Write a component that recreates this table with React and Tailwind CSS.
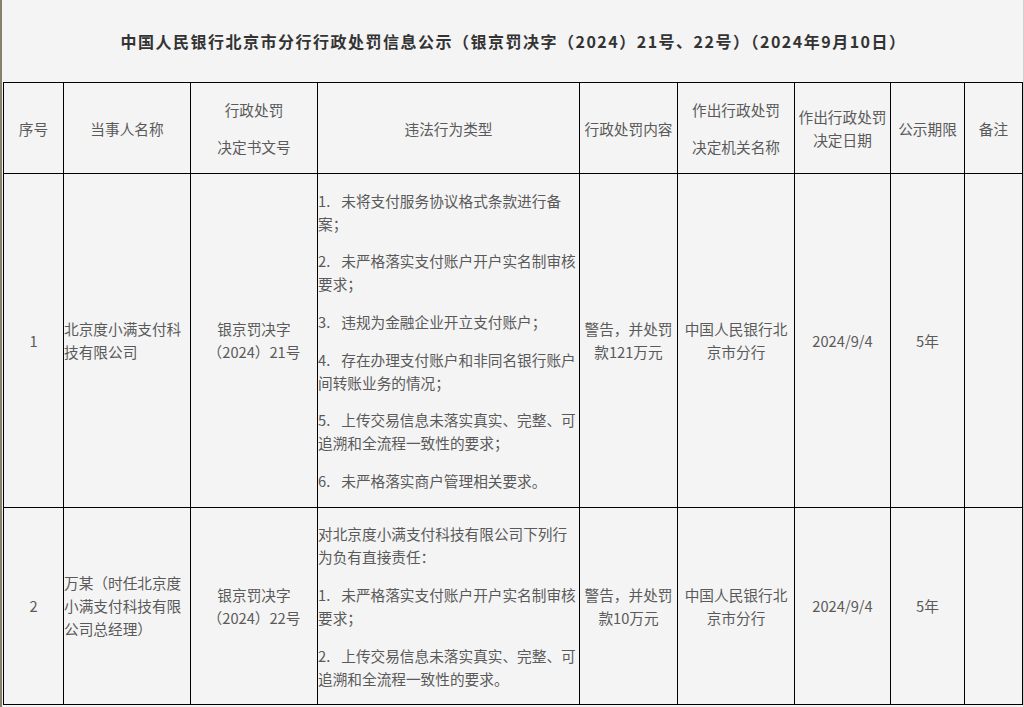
import React from "react";

const font = { fontFamily: '"Noto Sans CJK SC", "Noto Sans", sans-serif' };

function Cell({ children, className = "" }) {
  return (
    <td className={`border border-black align-middle p-0 ${className}`}>{children}</td>
  );
}

function HCell({ children, className = "" }) {
  return (
    <td className={`border border-black align-middle text-center p-0 ${className}`}>{children}</td>
  );
}

function Item({ n, children }) {
  return (
    <p className="my-[14.67px]">
      {n}.<span className="inline-block w-[11px]"></span>
      {children}
    </p>
  );
}

export default function App() {
  return (
    <div
      className="w-[1024px] h-[707px] overflow-hidden bg-[#f4f4f4] flex text-[#5a5a5a] text-[14.67px] leading-[23px]"
      style={font}
    >
      <div className="w-[2px] shrink-0 bg-[#8a7f6c]" />
      <div className="flex-1 flex flex-col">
        <div className="h-[82px] shrink-0 flex items-center justify-center">
          <h1 className="text-[16px] font-bold text-[#333] tracking-[1.5px] pl-[2px]">
            中国人民银行北京市分行行政处罚信息公示（银京罚决字（2024）21号、22号）（2024年9月10日）
          </h1>
        </div>
        <table className="table-fixed border-collapse w-[1019px] ml-[1px]">
          <colgroup>
            <col className="w-[60px]" />
            <col className="w-[127px]" />
            <col className="w-[127px]" />
            <col className="w-[262px]" />
            <col className="w-[98px]" />
            <col className="w-[117px]" />
            <col className="w-[96px]" />
            <col className="w-[74px]" />
            <col className="w-[58px]" />
          </colgroup>
          <tbody>
            <tr className="h-[91px]">
              <HCell>序号</HCell>
              <HCell>当事人名称</HCell>
              <HCell>
                <p className="my-[14px]">行政处罚</p>
                <p className="my-[14px]">决定书文号</p>
              </HCell>
              <HCell>违法行为类型</HCell>
              <HCell>行政处罚内容</HCell>
              <HCell>
                <p className="my-[14px]">作出行政处罚</p>
                <p className="my-[14px]">决定机关名称</p>
              </HCell>
              <HCell>
                作出行政处罚
                <br />
                决定日期
              </HCell>
              <HCell>公示期限</HCell>
              <HCell>备注</HCell>
            </tr>
            <tr>
              <Cell className="text-center">1</Cell>
              <Cell className="text-left">北京度小满支付科技有限公司</Cell>
              <Cell className="text-center">
                银京罚决字
                <br />
                （2024）21号
              </Cell>
              <Cell className="text-left">
                <Item n="1">未将支付服务协议格式条款进行备案；</Item>
                <Item n="2">未严格落实支付账户开户实名制审核要求；</Item>
                <Item n="3">违规为金融企业开立支付账户；</Item>
                <Item n="4">存在办理支付账户和非同名银行账户间转账业务的情况；</Item>
                <Item n="5">上传交易信息未落实真实、完整、可追溯和全流程一致性的要求；</Item>
                <Item n="6">未严格落实商户管理相关要求。</Item>
              </Cell>
              <Cell className="text-center">
                警告，并处罚
                <br />
                款121万元
              </Cell>
              <Cell className="text-center">
                中国人民银行北
                <br />
                京市分行
              </Cell>
              <Cell className="text-center">2024/9/4</Cell>
              <Cell className="text-center">5年</Cell>
              <Cell />
            </tr>
            <tr>
              <Cell className="text-center">2</Cell>
              <Cell className="text-left">万某（时任北京度小满支付科技有限公司总经理）</Cell>
              <Cell className="text-center">
                银京罚决字
                <br />
                （2024）22号
              </Cell>
              <Cell className="text-left">
                <p className="my-[14.67px]">对北京度小满支付科技有限公司下列行为负有直接责任：</p>
                <Item n="1">未严格落实支付账户开户实名制审核要求；</Item>
                <Item n="2">上传交易信息未落实真实、完整、可追溯和全流程一致性的要求。</Item>
              </Cell>
              <Cell className="text-center">
                警告，并处罚
                <br />
                款10万元
              </Cell>
              <Cell className="text-center">
                中国人民银行北
                <br />
                京市分行
              </Cell>
              <Cell className="text-center">2024/9/4</Cell>
              <Cell className="text-center">5年</Cell>
              <Cell />
            </tr>
          </tbody>
        </table>
      </div>
      <div className="w-[2px] shrink-0 bg-[#cfcfcf]" />
    </div>
  );
}
